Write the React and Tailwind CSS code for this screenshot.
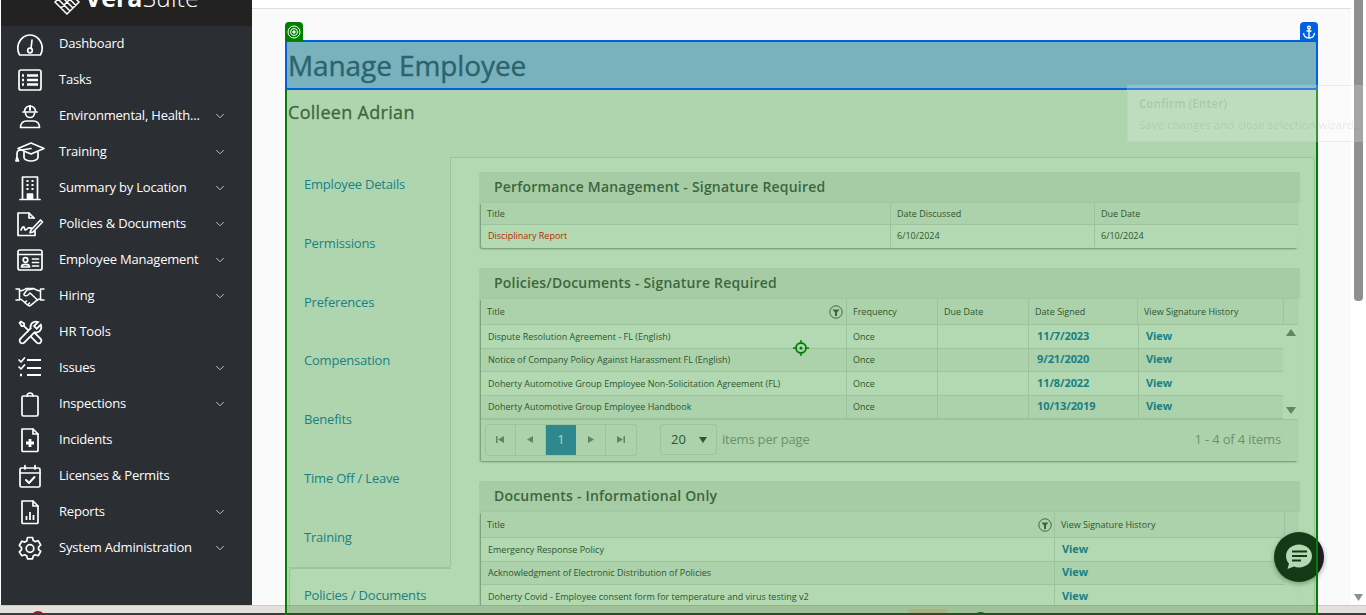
import React from "react";
import { ChevronDown } from "lucide-react";
import { LiaToolsSolid } from "react-icons/lia";

const S = ({ children, w = 26, h = 26 }) => (
  <svg width={w} height={h} viewBox={`0 0 ${w} ${h}`} fill="none" stroke="white" strokeWidth="1.7" strokeLinecap="round" strokeLinejoin="round" className="shrink-0">
    {children}
  </svg>
);

const icons = {
  dash: (
    <S w={28}>
      <path d="M3.5 24C2.3 21.500 1.800 19.500 1.800 17.500 1.800 10 7.500 4 14 4s12.200 6 12.200 13.500c0 2-.5 4-1.700 6.500z" />
      <path d="M16 9l-1 8.500" />
      <circle cx="14" cy="19.500" r="2.300" />
    </S>
  ),
  tasks: (
    <S>
      <rect x="2" y="3" width="22" height="20" rx="2" />
      <path d="M10 8.500h11M10 13h11M10 17.500h11" strokeWidth="2.400" strokeLinecap="butt" />
      <path d="M5 8.500h2M5 13h2M5 17.500h2" strokeWidth="2.400" strokeLinecap="butt" />
    </S>
  ),
  ehs: (
    <S>
      <path d="M7.500 8.500a5.500 5.500 0 0 1 11 0" />
      <path d="M6 9h14" />
      <path d="M13 3v4" strokeWidth="2" />
      <path d="M8.500 10a4.500 4.500 0 0 0 9 0" />
      <path d="M3.500 24.500c0-1 .2-6.500 6.500-6.500h6c6.300 0 6.500 5.500 6.500 6.500z" />
    </S>
  ),
  cap: (
    <S w={30} h={24}>
      <path d="M16 3L29 8.500 16 14 3 8.500z" />
      <path d="M9 12v5.500c0 2 3.500 3.500 7 3.500s7-1.500 7-3.500V12" />
      <path d="M16 8.500L3.500 10.500c-1 .5-1.500 1.500-1.500 3v3.500M2 17l-1 4h2.500z" />
    </S>
  ),
  bld: (
    <S>
      <path d="M5.500 24V2h15v22" />
      <path d="M3 24.500h20" />
      <path d="M9.500 6h2M14.500 6h2M9.500 10h2M14.500 10h2M9.500 14h2M14.500 14h2" strokeWidth="2.200" strokeLinecap="butt" />
      <path d="M10.500 24v-5h5v5" fill="white" />
    </S>
  ),
  pol: (
    <S w={30}>
      <path d="M20 20v4.500H3V2h11l5 5" />
      <path d="M14 2v5h5" />
      <path d="M6 19c1.500-4 3-4 3.500-1.500s1.500 1.500 3 0 2.500 0 4.500-.5" />
      <path d="M16 19l-1 2.800 3-.8L27.500 11l-2-2z" />
    </S>
  ),
  emp: (
    <S>
      <rect x="1" y="3" width="24" height="20" rx="2" />
      <path d="M1 7.500h24" />
      <circle cx="8.500" cy="13" r="2.300" />
      <path d="M4.500 20c0-3.500 8-3.500 8 0z" />
      <path d="M15.500 12h6M15.500 15.500h6M15.500 19h6" />
    </S>
  ),
  hire: (
    <svg width="30" height="22" viewBox="0 0 30 22" fill="none" stroke="white" strokeWidth="1.500" strokeLinecap="round" strokeLinejoin="round" className="shrink-0">
      <path d="M1 4h3.500v11H1M29 4h-3.500v11H29" />
      <path d="M4.500 6c3 0 5-1.500 7-2.500h7c2 1 4 2.500 7 2.500" />
      <path d="M4.500 14c1 0 2 .5 3 1.500l5 4.500c1 1 2.500 1 3.500.2l6-5c1-.7 2-1.200 3.500-1.200" />
      <path d="M17.500 4l-5.500 1-3 4c-.5 1.500 2 2.500 4 1l2-2 7.500 7" />
      <path d="M10 17.500l1.500-1.500M13 19.500l1.500-1.500" />
    </svg>
  ),
  tools: <LiaToolsSolid size={29} color="white" className="shrink-0" />,
  issues: (
    <S>
      <path d="M2 5l2 2 3.500-4M2 12l2 2 3.500-4" />
      <path d="M10 5h14M10 13h14M10 20h14" strokeWidth="2" strokeLinecap="butt" />
      <path d="M3 20h2" strokeWidth="2.400" strokeLinecap="butt" />
    </S>
  ),
  insp: (
    <S>
      <rect x="5" y="5" width="16" height="20" rx="1.500" />
      <path d="M10 5a3 3 0 0 1 6 0" />
    </S>
  ),
  inc: (
    <S>
      <path d="M5 2h11l5 5v16.500a1 1 0 0 1-1 1H6a1 1 0 0 1-1-1z" />
      <path d="M16 2v5h5" />
      <path d="M13 12v8M9 16h8" strokeWidth="2.800" strokeLinecap="butt" />
    </S>
  ),
  lic: (
    <S>
      <rect x="3" y="5" width="20" height="19" rx="1.500" />
      <path d="M3 10h20M8 2.500V6M18 2.500V6" />
      <path d="M9 17l3 3 5.500-6" strokeWidth="2" />
    </S>
  ),
  rep: (
    <S>
      <path d="M5 2h11l5 5v16.500a1 1 0 0 1-1 1H6a1 1 0 0 1-1-1z" />
      <path d="M16 2v5h5" />
      <path d="M9.500 21v-4M13 21v-8M16.500 21v-5" strokeWidth="1.800" strokeLinecap="butt" />
    </S>
  ),
  cog: (
    <S>
      <path d="M10.500 2.500h5l.7 3 2 1.100 3-.9 2.500 4.300-2.200 2.100v2.200l2.200 2.100-2.500 4.300-3-.9-2 1.100-.7 3h-5l-.7-3-2-1.100-3 .9L2.300 16.900 4.500 14.800v-2.200L2.300 10.500 4.800 6.200l3 .9 2-1.100z" />
      <circle cx="13" cy="13.500" r="3.800" />
    </S>
  ),
};

const menu = [
  ["dash", "Dashboard", false],
  ["tasks", "Tasks", false],
  ["ehs", "Environmental, Health...", true],
  ["cap", "Training", true],
  ["bld", "Summary by Location", true],
  ["pol", "Policies & Documents", true],
  ["emp", "Employee Management", true],
  ["hire", "Hiring", true],
  ["tools", "HR Tools", false],
  ["issues", "Issues", true],
  ["insp", "Inspections", true],
  ["inc", "Incidents", false],
  ["lic", "Licenses & Permits", false],
  ["rep", "Reports", true],
  ["cog", "System Administration", true],
];

const tabs = ["Employee Details", "Permissions", "Preferences", "Compensation", "Benefits", "Time Off / Leave", "Training"];

function Filter() {
  return (
    <svg width="14" height="14" viewBox="0 0 14 14" className="shrink-0">
      <circle cx="7" cy="7" r="6.200" fill="none" stroke="#595959" strokeWidth="1" />
      <path d="M3.500 4.500h7L8 7.500V11H6V7.500z" fill="#595959" />
    </svg>
  );
}

const Tri = ({ d }) => (
  <svg width="10" height="8" viewBox="0 0 10 8" className="shrink-0">
    <path d={d} fill="#888" />
  </svg>
);

function Card({ title, children, className = "" }) {
  return (
    <section className={className}>
      <h3 className="h-[31px] rounded-t-[3px] bg-[#ececec] pl-[15px] text-[14px] leading-[30px] font-semibold tracking-[0.2px] text-[#595959]">{title}</h3>
      <div className="mx-[2px] rounded-b-[2px] bg-white shadow-[-1px_1px_2px_rgba(0,0,0,0.4)]">{children}</div>
    </section>
  );
}

function Cell({ children, className = "" }) {
  return <div className={`flex items-center px-[6px] text-[9px] text-[#444] border-r border-[#e0e0e0] last:border-r-0 min-w-0 ${className}`}>{children}</div>;
}

const link = "text-[11px] font-bold tracking-[-0.1px] text-[#2a7fc0]";

const docs = [
  ["Dispute Resolution Agreement - FL (English)", "11/7/2023"],
  ["Notice of Company Policy Against Harassment FL (English)", "9/21/2020"],
  ["Doherty Automotive Group Employee Non-Solicitation Agreement (FL)", "11/8/2022"],
  ["Doherty Automotive Group Employee Handbook", "10/13/2019"],
];

const info = ["Emergency Response Policy", "Acknowledgment of Electronic Distribution of Policies", "Doherty Covid - Employee consent form for temperature and virus testing v2"];

const pagerBtn = "flex h-full w-[30px] items-center justify-center border-r border-[#e0e0e0]";

export default function App() {
  return (
    <div className="relative flex h-[615px] w-[1366px] flex-col overflow-hidden bg-white font-['Open_Sans',sans-serif]">
      <div className="flex h-[605px] shrink-0">
        {/* sidebar */}
        <aside className="ml-px flex w-[251px] shrink-0 flex-col bg-[#2b2e33]">
          <div className="flex h-[26px] shrink-0 items-end overflow-hidden bg-[#222222] pb-[16px] pl-[52px]">
            <svg width="28" height="28" viewBox="0 0 28 28" className="mr-[4px] mb-[-8px] shrink-0" fill="none" stroke="white" strokeWidth="1.500">
              <path d="M14 24L2 12 14 1l12 11zM8 6l12 12M20 6L8 18M5 9l12 12M11 3.500l12 12" />
            </svg>
            <span className="text-[25px] leading-none text-white">
              <b className="font-bold">Vera</b>
              <span className="font-light">Suite</span>
            </span>
          </div>
          <nav className="flex flex-col">
            {menu.map(([ic, label, chev]) => (
              <div key={label} className="flex h-[36px] items-center pl-[16px] text-[13px] tracking-[-0.2px] text-white">
                <span className="mr-[16px] flex w-[26px] shrink-0 items-center justify-center">{icons[ic]}</span>
                <span className="flex-1 whitespace-nowrap">{label}</span>
                {chev && <ChevronDown size={14} color="#d5d5d5" strokeWidth={1.5} className="mr-[25px] shrink-0" />}
              </div>
            ))}
          </nav>
        </aside>

        {/* main */}
        <main className="flex w-[1099px] shrink-0 flex-col overflow-hidden bg-[#fafafa]">
          <div className="h-[9px] shrink-0 border-b border-[#dddddd] bg-white" />
          <div className="flex flex-1 flex-col pr-[36px] pl-[36px]">
            <h1 className="mt-[31px] h-[46px] text-[28px] leading-[50px] font-normal tracking-[-0.1px] text-[#595959] [-webkit-text-stroke:0.4px_#595959]">Manage Employee</h1>
            <h2 className="mt-[13px] text-[18px] leading-[26px] font-normal tracking-[0.3px] text-[#595959] [-webkit-text-stroke:0.3px_#595959]">Colleen Adrian</h2>
            <div className="mt-[32px] flex flex-1 items-start">
              {/* tabs */}
              <div className="ml-px flex w-[162px] shrink-0 flex-col">
                {tabs.map((t, i) => (
                  <div key={t} className={`h-[58.75px] shrink-0 border-r border-[#e0e0e0] pt-[17px] pl-[15px] text-[13px] leading-[20px] tracking-[-0.2px] text-[#2a7fc0] ${i === 6 ? "rounded-br-[3px] border-b" : ""}`}>
                    {t}
                  </div>
                ))}
                <div className="h-[58px] shrink-0 rounded-tl-[4px] border-t border-l border-[#e0e0e0] bg-white pt-[16px] pl-[14px] text-[13px] leading-[20px] tracking-[-0.2px] text-[#2a7fc0]">Policies / Documents</div>
              </div>
              {/* panel */}
              <div className="h-[460px] flex-1 rounded-tr-[4px] border-t border-r border-[#e0e0e0] bg-white pt-[14px] pr-[14px] pl-[28px]">
                <Card title="Performance Management - Signature Required">
                  <div className="grid h-[22px] grid-cols-[410px_204px_1fr] border-b border-[#e0e0e0] bg-[#f5f5f5]">
                    <Cell>Title</Cell>
                    <Cell>Date Discussed</Cell>
                    <Cell>Due Date</Cell>
                  </div>
                  <div className="grid h-[23px] grid-cols-[410px_204px_1fr] pb-[1px]">
                    <Cell className="text-[#ff0000]">
                      <span className="pl-[1px]">Disciplinary Report</span>
                    </Cell>
                    <Cell>6/10/2024</Cell>
                    <Cell>6/10/2024</Cell>
                  </div>
                </Card>

                <Card title="Policies/Documents - Signature Required" className="mt-[20px]">
                  <div className="grid h-[26px] grid-cols-[366px_91px_91px_109px_146px_1fr] border-b border-[#e0e0e0] bg-[#f5f5f5]">
                    <Cell className="justify-between pr-[3px]">
                      Title
                      <Filter />
                    </Cell>
                    <Cell>Frequency</Cell>
                    <Cell>Due Date</Cell>
                    <Cell>Date Signed</Cell>
                    <Cell>View Signature History</Cell>
                    <Cell />
                  </div>
                  <div className="flex">
                    <div className="w-[802px] shrink-0">
                      {docs.map(([t, d], i) => (
                        <div key={t} className={`grid h-[23.500px] grid-cols-[366px_91px_91px_110px_1fr] border-b border-[#e0e0e0] ${i % 2 ? "bg-[#f5f5f5]" : "bg-white"}`}>
                          <Cell>
                            <span className="pl-[1px]">{t}</span>
                          </Cell>
                          <Cell>Once</Cell>
                          <Cell />
                          <Cell>
                            <span className={`${link} pb-[1px] pl-[2px]`}>{d}</span>
                          </Cell>
                          <Cell>
                            <span className={`${link} pb-[1px] pl-[1px]`}>View</span>
                          </Cell>
                        </div>
                      ))}
                    </div>
                    <div className="flex flex-1 flex-col items-center justify-between py-[4px]">
                      <Tri d="M5 0l5 7H0z" />
                      <Tri d="M0 0h10L5 7z" />
                    </div>
                  </div>
                  <div className="relative flex h-[42px] items-center border-t border-[#e0e0e0] bg-[#f5f5f5] pb-[2px] pl-[4px]">
                    <div className="flex h-[32px] w-[152px] items-center overflow-hidden rounded-[3px] border border-[#e0e0e0]">
                      <span className={pagerBtn}>
                        <svg width="8" height="7" viewBox="0 0 8 7"><path d="M0 0h1.500v7H0zM8 0v7L2 3.500z" fill="#888" /></svg>
                      </span>
                      <span className={pagerBtn}>
                        <svg width="6" height="7" viewBox="0 0 6 7"><path d="M6 0v7L0 3.500z" fill="#888" /></svg>
                      </span>
                      <span className="flex h-full w-[31px] items-center justify-center bg-[#428bca] text-[13px] text-white">1</span>
                      <span className={pagerBtn}>
                        <svg width="6" height="7" viewBox="0 0 6 7"><path d="M0 0v7l6-3.500z" fill="#888" /></svg>
                      </span>
                      <span className="flex h-full w-[30px] items-center justify-center">
                        <svg width="8" height="7" viewBox="0 0 8 7"><path d="M8 0H6.500v7H8zM0 0v7l6-3.500z" fill="#888" /></svg>
                      </span>
                    </div>
                    <div className="ml-[23px] flex h-[31px] w-[57px] items-center rounded-[3px] border border-[#e0e0e0] pr-[9px] pl-[10px] text-[13px] text-[#444]">
                      <span className="flex-1">20</span>
                      <svg width="8" height="6" viewBox="0 0 8 6"><path d="M0 0h8L4 6z" fill="#444" /></svg>
                    </div>
                    <span className="ml-[5px] text-[13px] tracking-[-0.2px] text-[#9a9a9a]">items per page</span>
                    <span className="ml-auto pr-[17px] text-[13px] tracking-[-0.15px] text-[#9a9a9a]">1 - 4 of 4 items</span>
                  </div>
                </Card>

                <Card title="Documents - Informational Only" className="mt-[20px]">
                  <div className="grid h-[26px] grid-cols-[574px_230px_1fr] border-b border-[#e0e0e0] bg-[#f5f5f5]">
                    <Cell className="justify-between pr-[2px]">
                      Title
                      <Filter />
                    </Cell>
                    <Cell>View Signature History</Cell>
                    <Cell />
                  </div>
                  <div className="w-[804px]">
                    {info.map((t, i) => (
                      <div key={t} className={`grid h-[23.500px] grid-cols-[574px_1fr] border-b border-[#e0e0e0] ${i % 2 ? "bg-[#f5f5f5]" : "bg-white"}`}>
                        <Cell>
                          <span className="pl-[1px]">{t}</span>
                        </Cell>
                        <Cell>
                          <span className={`${link} pb-[1px] pl-[1px]`}>View</span>
                        </Cell>
                      </div>
                    ))}
                  </div>
                </Card>
              </div>
            </div>
          </div>
        </main>

        {/* page scrollbar */}
        <div className="relative flex w-[15px] shrink-0 flex-col pl-[3px]">
          <div className="h-[301px] w-[9px] rounded-b-[4px] bg-[#8f8f8f]" />
          <svg width="9" height="7" viewBox="0 0 9 7" className="mt-auto mb-[4px]">
            <path d="M0 0h9L4.500 7z" fill="#8f8f8f" />
          </svg>
        </div>
      </div>

      {/* taskbar strip */}
      <div className="relative h-[8px] shrink-0 border-t border-[#cfc8c4] bg-[#e6dfda]">
        <div className="absolute top-[5px] left-[31px] h-[14px] w-[14px] rounded-full bg-[#a01c1c]" />
        <div className="absolute top-[3px] left-[908px] h-[14px] w-[40px] rounded-[4px] bg-[#f8c5b5]" />
        <div className="absolute top-[6px] left-[973px] h-[14px] w-[15px] rounded-full bg-[#0a6b3c]" />
      </div>
      <div className="relative h-[2px] shrink-0 bg-[#3c3c3c]" />

      {/* chat */}
      <div className="absolute top-[532px] left-[1274px] flex h-[50px] w-[50px] items-center justify-center rounded-full bg-[#1c1c22] shadow-[0_2px_5px_rgba(0,0,0,0.35)]">
        <svg width="28" height="28" viewBox="0 0 28 28">
          <path d="M14 1.500C21 1.500 27 6.500 27 13S21 24.500 14 24.500c-1.800 0-3.500-.3-5-.9L2.500 26l1.500-5.500C2 18.500 1 15.800 1 13 1 6.500 7 1.500 14 1.500z" fill="white" />
          <path d="M7 8.500h15M7 13h15M7 17.500h9" stroke="#1c1c22" strokeWidth="1.800" />
        </svg>
      </div>

      {/* selection overlays */}
      <div className="pointer-events-none absolute top-[41px] left-[285px] h-[574px] w-[1033px] border-x-2 border-[#008000] bg-[rgba(0,128,0,0.3)]">
        <svg width="16" height="16" viewBox="0 0 16 16" className="absolute top-[299px] left-[506px]">
          <circle cx="8" cy="8" r="5" fill="none" stroke="#008000" strokeWidth="1.800" />
          <circle cx="8" cy="8" r="1.500" fill="#008000" />
          <path d="M8 0v3M8 13v3M0 8h3M13 8h3" stroke="#008000" strokeWidth="1.500" />
        </svg>
      </div>
      <div className="pointer-events-none absolute top-[40px] left-[285px] h-[50px] w-[1033px] rounded-[3px] border-2 border-[#0060df] bg-[rgba(0,96,223,0.3)]" />
      <div className="absolute top-[22px] left-[285px] flex h-[19px] w-[18px] items-center justify-center rounded-t-[4px] bg-[#008000]">
        <svg width="14" height="14" viewBox="0 0 14 14" fill="none" stroke="white" strokeWidth="1">
          <circle cx="7" cy="7" r="6" />
          <circle cx="7" cy="7" r="3.500" />
          <circle cx="7" cy="7" r="1.200" fill="white" />
        </svg>
      </div>
      <div className="absolute top-[22px] left-[1300px] flex h-[19px] w-[18px] items-center justify-center rounded-t-[4px] bg-[#0060df]">
        <svg width="14" height="14" viewBox="0 0 14 14" fill="none" stroke="white" strokeWidth="1.400">
          <circle cx="7" cy="2.500" r="1.400" />
          <path d="M7 4v9M4.500 6h5M1.500 8c.3 3 2.500 5 5.500 5s5.200-2 5.500-5" />
        </svg>
      </div>

      {/* tooltip */}
      <div className="absolute top-[85px] left-[1127px] h-[57px] w-[242px] border border-[rgba(180,180,180,0.2)] bg-[rgba(255,255,255,0.2)] pt-[9px] pl-[11px] whitespace-nowrap text-[rgba(0,0,0,0.1)]">
        <div className="text-[11.500px] leading-[17px] font-bold">Confirm (Enter)</div>
        <div className="mt-[4px] text-[11.500px] leading-[17px]">Save changes and close selection wizard.</div>
      </div>
    </div>
  );
}
